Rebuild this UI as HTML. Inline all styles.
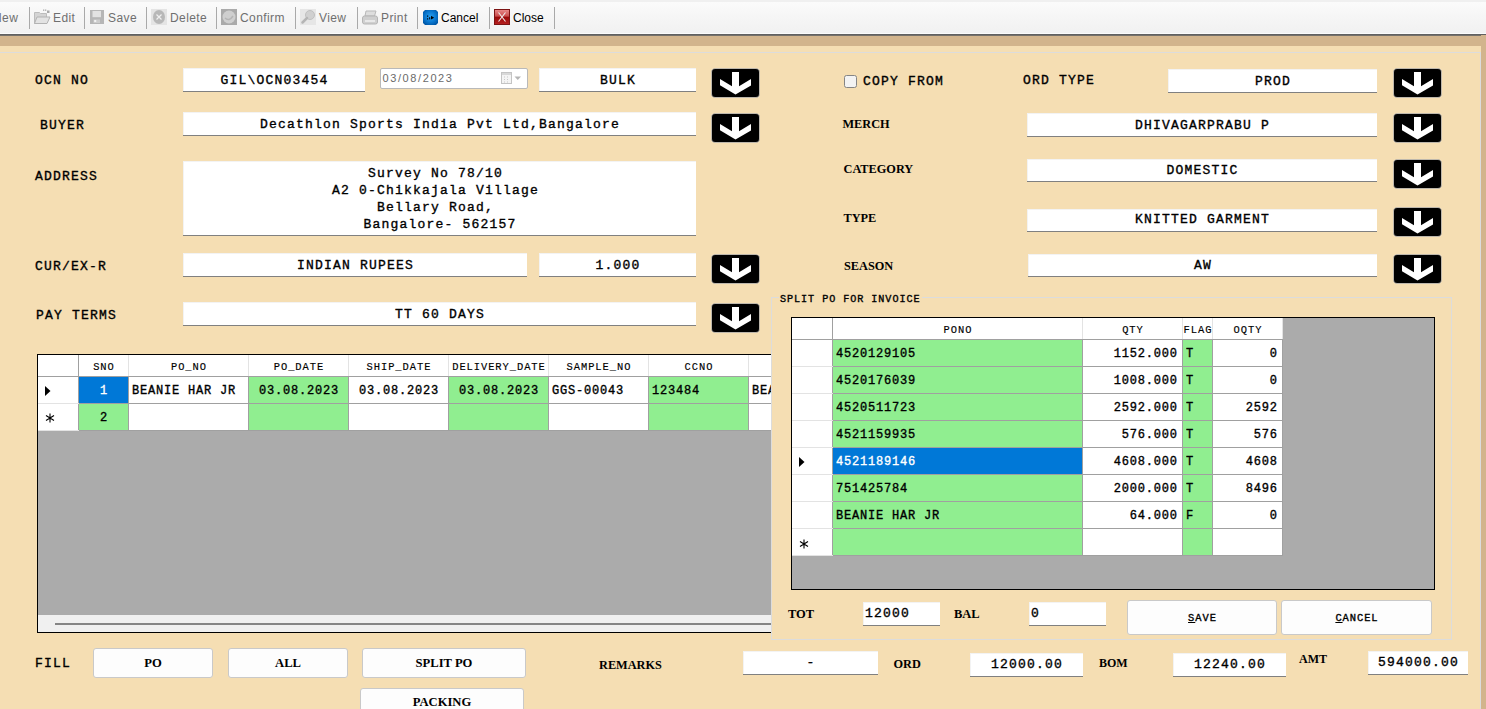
<!DOCTYPE html><html><head><meta charset="utf-8"><style>
*{margin:0;padding:0;box-sizing:border-box}
html,body{width:1486px;height:709px;overflow:hidden;background:#f5deb3;position:relative;font-family:"Liberation Sans",sans-serif}
.t{position:absolute;white-space:pre;color:#000}
.m{font-family:"Liberation Mono",monospace;font-weight:normal;-webkit-text-stroke:0.35px currentColor}
.s{font-family:"Liberation Serif",serif;font-weight:bold}
.tb{position:absolute;background:#fff;border-bottom:1px solid #808080;box-shadow:inset 1px 1px 0 #f3f3f3}
.ar{position:absolute;width:49px;height:30px}
.ar svg{display:block}
.bt{position:absolute;background:#fdfdfd;border:1px solid #c9c9c9;border-radius:3px}
.tool{position:absolute;font-family:"Liberation Sans",sans-serif;font-size:12px;line-height:14px;white-space:pre}
.sep{position:absolute;top:7px;width:1px;height:22px;background:#a9a9a9}
.g{position:absolute;overflow:hidden}
.c{position:absolute;overflow:hidden;white-space:pre;font-family:"Liberation Mono",monospace;font-weight:normal;-webkit-text-stroke:0.35px currentColor}
</style></head><body>
<div style="position:absolute;left:0;top:0;width:1486px;height:34px;background:linear-gradient(#f0f0f0 0,#f0f0f0 2px,#fbfbfb 2px,#f6f6f6 16px,#f1f1f1 33px)"></div>
<div style="position:absolute;left:0;top:33px;width:1486px;height:1px;background:#fbfbfb"></div>
<div style="position:absolute;left:0;top:34px;width:1486px;height:1px;background:#606060"></div>
<div style="position:absolute;left:0;top:35px;width:1486px;height:1px;background:#74706a"></div>
<div style="position:absolute;left:0;top:36px;width:1486px;height:10px;background:#d2b48c"></div>
<div style="position:absolute;left:1481px;top:35px;width:5px;height:674px;background:#d2b48c"></div>
<div style="position:absolute;left:0;top:52px;width:1481px;height:1px;background:#dcdcdc"></div>
<div style="position:absolute;left:1480px;top:52px;width:1px;height:657px;background:#dcdcdc"></div>
<div class="sep" style="left:29px"></div>
<div class="sep" style="left:84px"></div>
<div class="sep" style="left:146px"></div>
<div class="sep" style="left:216px"></div>
<div class="sep" style="left:295px"></div>
<div class="sep" style="left:357px"></div>
<div class="sep" style="left:417px"></div>
<div class="sep" style="left:489px"></div>
<div class="sep" style="left:554px"></div>
<div class="tool" style="left:-7px;top:10.8px;color:#6f6f6f;letter-spacing:0.4px">New</div>
<div class="tool" style="left:53px;top:10.8px;color:#6f6f6f;letter-spacing:0.4px">Edit</div>
<div class="tool" style="left:108px;top:10.8px;color:#6f6f6f;letter-spacing:0.4px">Save</div>
<div class="tool" style="left:170px;top:10.8px;color:#6f6f6f;letter-spacing:0.4px">Delete</div>
<div class="tool" style="left:240px;top:10.8px;color:#6f6f6f;letter-spacing:0.4px">Confirm</div>
<div class="tool" style="left:319px;top:10.8px;color:#6f6f6f;letter-spacing:0.4px">View</div>
<div class="tool" style="left:381px;top:10.8px;color:#6f6f6f;letter-spacing:0.4px">Print</div>
<div class="tool" style="left:441px;top:10.8px;color:#000;letter-spacing:0">Cancel</div>
<div class="tool" style="left:513px;top:10.8px;color:#000;letter-spacing:0">Close</div>
<svg style="position:absolute;left:34px;top:9px" width="17" height="16" viewBox="0 0 17 16">
<path d="M0.5 3.5 H5.5 L6.5 4.5 H12.5 V14.5 H0.5 Z" fill="#d4d4d4" stroke="#bcbcbc"/>
<path d="M3 8 H16 L13 14.5 H0.5 Z" fill="#e3e3e3" stroke="#b3b3b3"/>
<rect x="9" y="0.5" width="1.3" height="1.3" fill="#a9a9a9"/><rect x="11" y="0.5" width="1.3" height="1.3" fill="#a9a9a9"/>
<rect x="13" y="1.5" width="2.5" height="2.5" fill="#a9a9a9"/>
</svg>
<svg style="position:absolute;left:90px;top:10px" width="14" height="14" viewBox="0 0 14 14">
<rect x="0" y="0" width="14" height="14" fill="#b6b6b6"/>
<rect x="2.5" y="1" width="8.5" height="6.2" fill="#e2e2e2"/>
<rect x="3.5" y="9.5" width="6.5" height="3.5" fill="#cdcdcd"/>
<rect x="4.2" y="10" width="2" height="2" fill="#f2f2f2"/>
</svg>
<svg style="position:absolute;left:151px;top:9px" width="16" height="16" viewBox="0 0 16 16">
<rect x="0" y="0" width="16" height="16" fill="#e4e4e4"/>
<ellipse cx="8" cy="8" rx="6" ry="7" fill="#b8b8b8"/>
<path d="M5.5 5.5 L10.5 10.5 M10.5 5.5 L5.5 10.5" stroke="#f0f0f0" stroke-width="1.2"/>
</svg>
<svg style="position:absolute;left:221px;top:9px" width="16" height="16" viewBox="0 0 16 16">
<rect x="0" y="0" width="16" height="16" fill="#aaaaaa"/>
<circle cx="8" cy="8" r="6.5" fill="#cfcfcf"/>
<path d="M4 9 Q8 13 12 7" fill="none" stroke="#b5b5b5" stroke-width="1.5"/>
</svg>
<svg style="position:absolute;left:300px;top:9px" width="16" height="16" viewBox="0 0 16 16">
<rect x="0" y="0" width="16" height="16" fill="#e6e6e6"/>
<circle cx="10" cy="6" r="4.5" fill="#d0d0d0" stroke="#c0c0c0"/>
<path d="M7 9 L2.5 13.5" stroke="#b5b5b5" stroke-width="2.5" stroke-linecap="round"/>
</svg>
<svg style="position:absolute;left:362px;top:10px" width="16" height="15" viewBox="0 0 16 15">
<path d="M4 1 H14 L12.5 6 H3 Z" fill="#dedede" stroke="#b9b9b9"/>
<rect x="0.5" y="6" width="15" height="8" rx="2" fill="#cfcfcf" stroke="#b5b5b5"/>
<rect x="3" y="10" width="10" height="2" fill="#e8e8e8"/>
</svg>
<svg style="position:absolute;left:423px;top:10px" width="15" height="15" viewBox="0 0 15 15">
<defs><radialGradient id="cb" cx="0.5" cy="0.45" r="0.6"><stop offset="0" stop-color="#2aa0f0"/><stop offset="0.6" stop-color="#0a78d0"/><stop offset="1" stop-color="#0058a8"/></radialGradient></defs>
<path d="M2 0 H13 L15 2 V13 L13 15 H2 L0 13 V2 Z" fill="url(#cb)"/>
<rect x="4" y="5.5" width="1.2" height="1.2" fill="#000"/><rect x="4" y="8.3" width="1.2" height="1.2" fill="#000"/><rect x="6.2" y="7.2" width="1" height="2.2" fill="#000"/>
<path d="M8 5.8 L11.2 7.7 L8 9.6 Z" fill="#000"/>
</svg>
<svg style="position:absolute;left:494px;top:9px" width="16" height="16" viewBox="0 0 16 16">
<defs><linearGradient id="cr" x1="0" y1="0" x2="0" y2="1"><stop offset="0" stop-color="#e98c8c"/><stop offset="0.45" stop-color="#c84a4a"/><stop offset="0.5" stop-color="#980808"/><stop offset="1" stop-color="#b82222"/></linearGradient></defs>
<rect x="0.5" y="0.5" width="15" height="15" fill="url(#cr)" stroke="#7c1414"/>
<path d="M4.5 3.5 L11.5 12.5 M11.5 3.5 L4.5 12.5" stroke="#eeeeee" stroke-width="1.1"/>
</svg>
<div class="t m" style="left:35px;top:72.03px;font-size:13.02px;letter-spacing:1.19px;line-height:17px;color:#000;">OCN NO</div>
<div class="tb" style="left:183px;top:68px;width:182px;height:24px;"></div>
<div class="t m" style="left:183.59px;width:182px;text-align:center;top:71.53px;font-size:13.02px;letter-spacing:1.19px;line-height:17px;">GIL\OCN03454</div>
<div style="position:absolute;left:380px;top:68px;width:148px;height:21px;background:#fff;border:1px solid #b9b9b9;border-radius:2px"></div>
<div class="t" style="left:382.5px;top:71px;font-family:'Liberation Sans', sans-serif;font-size:11px;line-height:14px;letter-spacing:1.6px;color:#6a6a6a">03/08/2023</div>
<svg style="position:absolute;left:501px;top:72px" width="21" height="13" viewBox="0 0 21 13">
<rect x="0.5" y="0.5" width="10" height="11" fill="#f4f4f4" stroke="#c4c4c4"/>
<rect x="1" y="1" width="9" height="2" fill="#d8d8d8"/>
<path d="M3 5 h1 M6 5 h1 M3 7.5 h1 M6 7.5 h1 M3 10 h1 M6 10 h1" stroke="#c8c8c8"/>
<path d="M13.5 4.5 H20 L16.75 8 Z" fill="#b5b5b5"/>
</svg>
<div class="tb" style="left:539px;top:68px;width:157px;height:24px;"></div>
<div class="t m" style="left:539.59px;width:157px;text-align:center;top:71.53px;font-size:13.02px;letter-spacing:1.19px;line-height:17px;">BULK</div>
<div class="ar" style="left:711px;top:68px;"><svg width="49" height="30" viewBox="0 0 49 30"><rect x="0.5" y="0.5" width="48" height="29" rx="3.5" ry="3.5" fill="#000" stroke="#fff" stroke-opacity="0.5" stroke-width="1"/><path d="M21 4 H28 V18.3 L40 11 V17.4 L24.5 26.5 L9 17.2 V11 L21 18.3 Z" fill="#fff"/></svg></div>
<div style="position:absolute;left:844px;top:75px;width:13px;height:13px;background:#f3f3f3;border:1px solid #858585;border-radius:2.5px"></div>
<div class="t m" style="left:863px;top:73.03px;font-size:13.02px;letter-spacing:1.19px;line-height:17px;color:#000;">COPY FROM</div>
<div class="t m" style="left:1023px;top:72.03px;font-size:13.02px;letter-spacing:1.19px;line-height:17px;color:#000;">ORD TYPE</div>
<div class="tb" style="left:1168px;top:69px;width:209px;height:24px;"></div>
<div class="t m" style="left:1168.59px;width:209px;text-align:center;top:72.53px;font-size:13.02px;letter-spacing:1.19px;line-height:17px;">PROD</div>
<div class="ar" style="left:1392.5px;top:67.5px;"><svg width="49" height="30" viewBox="0 0 49 30"><rect x="0.5" y="0.5" width="48" height="29" rx="3.5" ry="3.5" fill="#000" stroke="#fff" stroke-opacity="0.5" stroke-width="1"/><path d="M21 4 H28 V18.3 L40 11 V17.4 L24.5 26.5 L9 17.2 V11 L21 18.3 Z" fill="#fff"/></svg></div>
<div class="t m" style="left:40px;top:116.53px;font-size:13.02px;letter-spacing:1.19px;line-height:17px;color:#000;">BUYER</div>
<div class="tb" style="left:183px;top:112px;width:513px;height:24px;"></div>
<div class="t m" style="left:183.59px;width:513px;text-align:center;top:116.03px;font-size:13.02px;letter-spacing:1.19px;line-height:17px;">Decathlon Sports India Pvt Ltd,Bangalore</div>
<div class="ar" style="left:711px;top:112.5px;"><svg width="49" height="30" viewBox="0 0 49 30"><rect x="0.5" y="0.5" width="48" height="29" rx="3.5" ry="3.5" fill="#000" stroke="#fff" stroke-opacity="0.5" stroke-width="1"/><path d="M21 4 H28 V18.3 L40 11 V17.4 L24.5 26.5 L9 17.2 V11 L21 18.3 Z" fill="#fff"/></svg></div>
<div class="t s" style="left:842.5px;top:115.85px;font-size:12.3px;line-height:16px;">MERCH</div>
<div class="tb" style="left:1027px;top:113px;width:350px;height:24px;"></div>
<div class="t m" style="left:1027.59px;width:350px;text-align:center;top:116.53px;font-size:13.02px;letter-spacing:1.19px;line-height:17px;">DHIVAGARPRABU P</div>
<div class="ar" style="left:1392.5px;top:112.5px;"><svg width="49" height="30" viewBox="0 0 49 30"><rect x="0.5" y="0.5" width="48" height="29" rx="3.5" ry="3.5" fill="#000" stroke="#fff" stroke-opacity="0.5" stroke-width="1"/><path d="M21 4 H28 V18.3 L40 11 V17.4 L24.5 26.5 L9 17.2 V11 L21 18.3 Z" fill="#fff"/></svg></div>
<div class="t m" style="left:35px;top:167.53px;font-size:13.02px;letter-spacing:1.19px;line-height:17px;color:#000;">ADDRESS</div>
<div class="tb" style="left:183px;top:161px;width:513px;height:75px"></div>
<div class="t m" style="left:183.59px;top:164.5px;width:513px;text-align:center;font-size:13.02px;letter-spacing:1.19px;line-height:17px;">Survey No 78/10 
A2 0-Chikkajala Village 
Bellary Road, 
Bangalore- 562157</div>
<div class="t s" style="left:843.5px;top:160.85px;font-size:12.3px;line-height:16px;">CATEGORY</div>
<div class="tb" style="left:1027px;top:159px;width:350px;height:23px;"></div>
<div class="t m" style="left:1027.59px;width:350px;text-align:center;top:161.73px;font-size:13.02px;letter-spacing:1.19px;line-height:17px;">DOMESTIC</div>
<div class="ar" style="left:1392.5px;top:158.5px;"><svg width="49" height="30" viewBox="0 0 49 30"><rect x="0.5" y="0.5" width="48" height="29" rx="3.5" ry="3.5" fill="#000" stroke="#fff" stroke-opacity="0.5" stroke-width="1"/><path d="M21 4 H28 V18.3 L40 11 V17.4 L24.5 26.5 L9 17.2 V11 L21 18.3 Z" fill="#fff"/></svg></div>
<div class="t s" style="left:843.5px;top:210.35px;font-size:12.3px;line-height:16px;">TYPE</div>
<div class="tb" style="left:1027px;top:209px;width:350px;height:23px;"></div>
<div class="t m" style="left:1027.59px;width:350px;text-align:center;top:211.03px;font-size:13.02px;letter-spacing:1.19px;line-height:17px;">KNITTED GARMENT</div>
<div class="ar" style="left:1392.5px;top:206.5px;"><svg width="49" height="30" viewBox="0 0 49 30"><rect x="0.5" y="0.5" width="48" height="29" rx="3.5" ry="3.5" fill="#000" stroke="#fff" stroke-opacity="0.5" stroke-width="1"/><path d="M21 4 H28 V18.3 L40 11 V17.4 L24.5 26.5 L9 17.2 V11 L21 18.3 Z" fill="#fff"/></svg></div>
<div class="t m" style="left:35px;top:258.03px;font-size:13.02px;letter-spacing:1.19px;line-height:17px;color:#000;">CUR/EX-R</div>
<div class="tb" style="left:183px;top:253px;width:344px;height:24px;"></div>
<div class="t m" style="left:183.59px;width:344px;text-align:center;top:256.53px;font-size:13.02px;letter-spacing:1.19px;line-height:17px;">INDIAN RUPEES</div>
<div class="tb" style="left:539px;top:253px;width:157px;height:24px;"></div>
<div class="t m" style="left:539.59px;width:157px;text-align:center;top:256.53px;font-size:13.02px;letter-spacing:1.19px;line-height:17px;">1.000</div>
<div class="ar" style="left:711px;top:253.5px;"><svg width="49" height="30" viewBox="0 0 49 30"><rect x="0.5" y="0.5" width="48" height="29" rx="3.5" ry="3.5" fill="#000" stroke="#fff" stroke-opacity="0.5" stroke-width="1"/><path d="M21 4 H28 V18.3 L40 11 V17.4 L24.5 26.5 L9 17.2 V11 L21 18.3 Z" fill="#fff"/></svg></div>
<div class="t s" style="left:844px;top:258.35px;font-size:12.3px;line-height:16px;">SEASON</div>
<div class="tb" style="left:1028px;top:254px;width:349px;height:23px;"></div>
<div class="t m" style="left:1028.59px;width:349px;text-align:center;top:256.53px;font-size:13.02px;letter-spacing:1.19px;line-height:17px;">AW</div>
<div class="ar" style="left:1392.5px;top:253.5px;"><svg width="49" height="30" viewBox="0 0 49 30"><rect x="0.5" y="0.5" width="48" height="29" rx="3.5" ry="3.5" fill="#000" stroke="#fff" stroke-opacity="0.5" stroke-width="1"/><path d="M21 4 H28 V18.3 L40 11 V17.4 L24.5 26.5 L9 17.2 V11 L21 18.3 Z" fill="#fff"/></svg></div>
<div class="t m" style="left:36px;top:306.53px;font-size:13.02px;letter-spacing:1.19px;line-height:17px;color:#000;">PAY TERMS</div>
<div class="tb" style="left:183px;top:302px;width:513px;height:24px;"></div>
<div class="t m" style="left:183.59px;width:513px;text-align:center;top:305.53px;font-size:13.02px;letter-spacing:1.19px;line-height:17px;">TT 60 DAYS</div>
<div class="ar" style="left:711px;top:302.5px;"><svg width="49" height="30" viewBox="0 0 49 30"><rect x="0.5" y="0.5" width="48" height="29" rx="3.5" ry="3.5" fill="#000" stroke="#fff" stroke-opacity="0.5" stroke-width="1"/><path d="M21 4 H28 V18.3 L40 11 V17.4 L24.5 26.5 L9 17.2 V11 L21 18.3 Z" fill="#fff"/></svg></div>
<div class="g" style="left:37px;top:354px;width:734px;height:279px;background:#ababab;border-top:1px solid #000;border-left:1px solid #000;border-bottom:1px solid #000">
<div class="c" style="left:0px;top:0px;width:40px;height:21px;background:#fff;"></div>
<div class="c" style="left:40px;top:0px;width:1px;height:22px;background:#a0a0a0"></div>
<div class="c" style="left:0px;top:21px;width:41px;height:1px;background:#a0a0a0"></div>
<div class="c" style="left:41px;top:0px;width:49px;height:21px;background:#fff;"></div>
<div class="c" style="left:90px;top:0px;width:1px;height:22px;background:#e3e3e3"></div>
<div class="c" style="left:41px;top:21px;width:50px;height:1px;background:#a0a0a0"></div>
<div class="c" style="left:41.48px;top:5.42px;width:49px;text-align:center;font-size:10.42px;letter-spacing:0.95px;line-height:14px;color:#000;-webkit-text-stroke:0.15px #000">SNO</div>
<div class="c" style="left:91px;top:0px;width:119px;height:21px;background:#fff;"></div>
<div class="c" style="left:210px;top:0px;width:1px;height:22px;background:#e3e3e3"></div>
<div class="c" style="left:91px;top:21px;width:120px;height:1px;background:#a0a0a0"></div>
<div class="c" style="left:91.48px;top:5.42px;width:119px;text-align:center;font-size:10.42px;letter-spacing:0.95px;line-height:14px;color:#000;-webkit-text-stroke:0.15px #000">PO_NO</div>
<div class="c" style="left:211px;top:0px;width:99px;height:21px;background:#fff;"></div>
<div class="c" style="left:310px;top:0px;width:1px;height:22px;background:#e3e3e3"></div>
<div class="c" style="left:211px;top:21px;width:100px;height:1px;background:#a0a0a0"></div>
<div class="c" style="left:211.48px;top:5.42px;width:99px;text-align:center;font-size:10.42px;letter-spacing:0.95px;line-height:14px;color:#000;-webkit-text-stroke:0.15px #000">PO_DATE</div>
<div class="c" style="left:311px;top:0px;width:99px;height:21px;background:#fff;"></div>
<div class="c" style="left:410px;top:0px;width:1px;height:22px;background:#e3e3e3"></div>
<div class="c" style="left:311px;top:21px;width:100px;height:1px;background:#a0a0a0"></div>
<div class="c" style="left:311.48px;top:5.42px;width:99px;text-align:center;font-size:10.42px;letter-spacing:0.95px;line-height:14px;color:#000;-webkit-text-stroke:0.15px #000">SHIP_DATE</div>
<div class="c" style="left:411px;top:0px;width:99px;height:21px;background:#fff;"></div>
<div class="c" style="left:510px;top:0px;width:1px;height:22px;background:#e3e3e3"></div>
<div class="c" style="left:411px;top:21px;width:100px;height:1px;background:#a0a0a0"></div>
<div class="c" style="left:411.48px;top:5.42px;width:99px;text-align:center;font-size:10.42px;letter-spacing:0.95px;line-height:14px;color:#000;-webkit-text-stroke:0.15px #000">DELIVERY_DATE</div>
<div class="c" style="left:511px;top:0px;width:99px;height:21px;background:#fff;"></div>
<div class="c" style="left:610px;top:0px;width:1px;height:22px;background:#e3e3e3"></div>
<div class="c" style="left:511px;top:21px;width:100px;height:1px;background:#a0a0a0"></div>
<div class="c" style="left:511.48px;top:5.42px;width:99px;text-align:center;font-size:10.42px;letter-spacing:0.95px;line-height:14px;color:#000;-webkit-text-stroke:0.15px #000">SAMPLE_NO</div>
<div class="c" style="left:611px;top:0px;width:99px;height:21px;background:#fff;"></div>
<div class="c" style="left:710px;top:0px;width:1px;height:22px;background:#e3e3e3"></div>
<div class="c" style="left:611px;top:21px;width:100px;height:1px;background:#a0a0a0"></div>
<div class="c" style="left:611.48px;top:5.42px;width:99px;text-align:center;font-size:10.42px;letter-spacing:0.95px;line-height:14px;color:#000;-webkit-text-stroke:0.15px #000">CCNO</div>
<div class="c" style="left:711px;top:0px;width:100px;height:21px;background:#fff;"></div>
<div class="c" style="left:811px;top:0px;width:1px;height:22px;background:#e3e3e3"></div>
<div class="c" style="left:711px;top:21px;width:101px;height:1px;background:#a0a0a0"></div>
<div class="c" style="left:0px;top:22px;width:40px;height:26px;background:#fff;"></div>
<div class="c" style="left:40px;top:22px;width:1px;height:27px;background:#a0a0a0"></div>
<div class="c" style="left:0px;top:48px;width:41px;height:1px;background:#e3e3e3"></div>
<div class="c" style="left:41px;top:22px;width:49px;height:26px;background:#0078d7;"></div>
<div class="c" style="left:90px;top:22px;width:1px;height:27px;background:#a0a0a0"></div>
<div class="c" style="left:41px;top:48px;width:50px;height:1px;background:#a0a0a0"></div>
<div class="c" style="left:41.40px;top:28.20px;width:49px;text-align:center;font-size:12.00px;letter-spacing:0.80px;line-height:16px;color:#fff;">1</div>
<div class="c" style="left:91px;top:22px;width:119px;height:26px;background:#fff;"></div>
<div class="c" style="left:210px;top:22px;width:1px;height:27px;background:#a0a0a0"></div>
<div class="c" style="left:91px;top:48px;width:120px;height:1px;background:#a0a0a0"></div>
<div class="c" style="left:94px;top:28.20px;width:116px;font-size:12.00px;letter-spacing:0.80px;line-height:16px;color:#000;">BEANIE HAR JR</div>
<div class="c" style="left:211px;top:22px;width:99px;height:26px;background:#90ee90;"></div>
<div class="c" style="left:310px;top:22px;width:1px;height:27px;background:#a0a0a0"></div>
<div class="c" style="left:211px;top:48px;width:100px;height:1px;background:#a0a0a0"></div>
<div class="c" style="left:211.40px;top:28.20px;width:99px;text-align:center;font-size:12.00px;letter-spacing:0.80px;line-height:16px;color:#000;">03.08.2023</div>
<div class="c" style="left:311px;top:22px;width:99px;height:26px;background:#fff;"></div>
<div class="c" style="left:410px;top:22px;width:1px;height:27px;background:#a0a0a0"></div>
<div class="c" style="left:311px;top:48px;width:100px;height:1px;background:#a0a0a0"></div>
<div class="c" style="left:311.40px;top:28.20px;width:99px;text-align:center;font-size:12.00px;letter-spacing:0.80px;line-height:16px;color:#000;">03.08.2023</div>
<div class="c" style="left:411px;top:22px;width:99px;height:26px;background:#90ee90;"></div>
<div class="c" style="left:510px;top:22px;width:1px;height:27px;background:#a0a0a0"></div>
<div class="c" style="left:411px;top:48px;width:100px;height:1px;background:#a0a0a0"></div>
<div class="c" style="left:411.40px;top:28.20px;width:99px;text-align:center;font-size:12.00px;letter-spacing:0.80px;line-height:16px;color:#000;">03.08.2023</div>
<div class="c" style="left:511px;top:22px;width:99px;height:26px;background:#fff;"></div>
<div class="c" style="left:610px;top:22px;width:1px;height:27px;background:#a0a0a0"></div>
<div class="c" style="left:511px;top:48px;width:100px;height:1px;background:#a0a0a0"></div>
<div class="c" style="left:514px;top:28.20px;width:96px;font-size:12.00px;letter-spacing:0.80px;line-height:16px;color:#000;">GGS-00043</div>
<div class="c" style="left:611px;top:22px;width:99px;height:26px;background:#90ee90;"></div>
<div class="c" style="left:710px;top:22px;width:1px;height:27px;background:#a0a0a0"></div>
<div class="c" style="left:611px;top:48px;width:100px;height:1px;background:#a0a0a0"></div>
<div class="c" style="left:614px;top:28.20px;width:96px;font-size:12.00px;letter-spacing:0.80px;line-height:16px;color:#000;">123484</div>
<div class="c" style="left:711px;top:22px;width:100px;height:26px;background:#fff;"></div>
<div class="c" style="left:811px;top:22px;width:1px;height:27px;background:#a0a0a0"></div>
<div class="c" style="left:711px;top:48px;width:101px;height:1px;background:#a0a0a0"></div>
<div class="c" style="left:714px;top:28.20px;width:97px;font-size:12.00px;letter-spacing:0.80px;line-height:16px;color:#000;">BEANIE HAR JR</div>
<div class="c" style="left:0px;top:49px;width:40px;height:26px;background:#fff;"></div>
<div class="c" style="left:40px;top:49px;width:1px;height:27px;background:#a0a0a0"></div>
<div class="c" style="left:0px;top:75px;width:41px;height:1px;background:#e3e3e3"></div>
<div class="c" style="left:41px;top:49px;width:49px;height:26px;background:#90ee90;"></div>
<div class="c" style="left:90px;top:49px;width:1px;height:27px;background:#a0a0a0"></div>
<div class="c" style="left:41px;top:75px;width:50px;height:1px;background:#a0a0a0"></div>
<div class="c" style="left:41.40px;top:55.20px;width:49px;text-align:center;font-size:12.00px;letter-spacing:0.80px;line-height:16px;color:#000;">2</div>
<div class="c" style="left:91px;top:49px;width:119px;height:26px;background:#fff;"></div>
<div class="c" style="left:210px;top:49px;width:1px;height:27px;background:#a0a0a0"></div>
<div class="c" style="left:91px;top:75px;width:120px;height:1px;background:#a0a0a0"></div>
<div class="c" style="left:211px;top:49px;width:99px;height:26px;background:#90ee90;"></div>
<div class="c" style="left:310px;top:49px;width:1px;height:27px;background:#a0a0a0"></div>
<div class="c" style="left:211px;top:75px;width:100px;height:1px;background:#a0a0a0"></div>
<div class="c" style="left:311px;top:49px;width:99px;height:26px;background:#fff;"></div>
<div class="c" style="left:410px;top:49px;width:1px;height:27px;background:#a0a0a0"></div>
<div class="c" style="left:311px;top:75px;width:100px;height:1px;background:#a0a0a0"></div>
<div class="c" style="left:411px;top:49px;width:99px;height:26px;background:#90ee90;"></div>
<div class="c" style="left:510px;top:49px;width:1px;height:27px;background:#a0a0a0"></div>
<div class="c" style="left:411px;top:75px;width:100px;height:1px;background:#a0a0a0"></div>
<div class="c" style="left:511px;top:49px;width:99px;height:26px;background:#fff;"></div>
<div class="c" style="left:610px;top:49px;width:1px;height:27px;background:#a0a0a0"></div>
<div class="c" style="left:511px;top:75px;width:100px;height:1px;background:#a0a0a0"></div>
<div class="c" style="left:611px;top:49px;width:99px;height:26px;background:#90ee90;"></div>
<div class="c" style="left:710px;top:49px;width:1px;height:27px;background:#a0a0a0"></div>
<div class="c" style="left:611px;top:75px;width:100px;height:1px;background:#a0a0a0"></div>
<div class="c" style="left:711px;top:49px;width:100px;height:26px;background:#fff;"></div>
<div class="c" style="left:811px;top:49px;width:1px;height:27px;background:#a0a0a0"></div>
<div class="c" style="left:711px;top:75px;width:101px;height:1px;background:#a0a0a0"></div>
<svg class="c" style="left:7px;top:31px" width="6" height="10" viewBox="0 0 6 10"><path d="M0 0 L5.5 5 L0 10 Z" fill="#000"/></svg>
<svg class="c" style="left:7px;top:58px" width="10" height="10" viewBox="0 0 10 10"><path d="M5 0.5 V9.5 M1 2.5 L9 7.5 M9 2.5 L1 7.5" stroke="#000" stroke-width="1.1"/></svg>
<div class="c" style="left:0;top:260px;width:800px;height:17px;background:#f0f0f0"></div>
<div class="c" style="left:17px;top:268px;width:800px;height:2px;background:#858585"></div>
</div>
<div style="position:absolute;left:771px;top:297px;width:681px;height:343px;background:#f5deb3;border:1px solid #dcdcdc"></div>
<div class="t m" style="left:779px;top:293px;font-size:10.16px;letter-spacing:0.93px;line-height:14px;background:#f5deb3;padding:0 1px">SPLIT PO FOR INVOICE</div>
<div class="g" style="left:791px;top:317px;width:644px;height:273px;background:#ababab;border:1px solid #000">
<div class="c" style="left:0px;top:0px;width:40px;height:21px;background:#fff;"></div>
<div class="c" style="left:40px;top:0px;width:1px;height:22px;background:#a0a0a0"></div>
<div class="c" style="left:0px;top:21px;width:41px;height:1px;background:#a0a0a0"></div>
<div class="c" style="left:41px;top:0px;width:249px;height:21px;background:#fff;"></div>
<div class="c" style="left:290px;top:0px;width:1px;height:22px;background:#e3e3e3"></div>
<div class="c" style="left:41px;top:21px;width:250px;height:1px;background:#a0a0a0"></div>
<div class="c" style="left:41.48px;top:5.02px;width:249px;text-align:center;font-size:10.42px;letter-spacing:0.95px;line-height:14px;color:#000;-webkit-text-stroke:0.15px #000">PONO</div>
<div class="c" style="left:291px;top:0px;width:99px;height:21px;background:#fff;"></div>
<div class="c" style="left:390px;top:0px;width:1px;height:22px;background:#e3e3e3"></div>
<div class="c" style="left:291px;top:21px;width:100px;height:1px;background:#a0a0a0"></div>
<div class="c" style="left:291.48px;top:5.02px;width:99px;text-align:center;font-size:10.42px;letter-spacing:0.95px;line-height:14px;color:#000;-webkit-text-stroke:0.15px #000">QTY</div>
<div class="c" style="left:391px;top:0px;width:29px;height:21px;background:#fff;"></div>
<div class="c" style="left:420px;top:0px;width:1px;height:22px;background:#e3e3e3"></div>
<div class="c" style="left:391px;top:21px;width:30px;height:1px;background:#a0a0a0"></div>
<div class="c" style="left:391.48px;top:5.02px;width:29px;text-align:center;font-size:10.42px;letter-spacing:0.95px;line-height:14px;color:#000;-webkit-text-stroke:0.15px #000">FLAG</div>
<div class="c" style="left:421px;top:0px;width:69px;height:21px;background:#fff;"></div>
<div class="c" style="left:490px;top:0px;width:1px;height:22px;background:#e3e3e3"></div>
<div class="c" style="left:421px;top:21px;width:70px;height:1px;background:#a0a0a0"></div>
<div class="c" style="left:421.48px;top:5.02px;width:69px;text-align:center;font-size:10.42px;letter-spacing:0.95px;line-height:14px;color:#000;-webkit-text-stroke:0.15px #000">OQTY</div>
<div class="c" style="left:0px;top:22px;width:40px;height:26px;background:#fff;"></div>
<div class="c" style="left:40px;top:22px;width:1px;height:27px;background:#a0a0a0"></div>
<div class="c" style="left:0px;top:48px;width:41px;height:1px;background:#e3e3e3"></div>
<div class="c" style="left:41px;top:22px;width:249px;height:26px;background:#90ee90;"></div>
<div class="c" style="left:290px;top:22px;width:1px;height:27px;background:#a0a0a0"></div>
<div class="c" style="left:41px;top:48px;width:250px;height:1px;background:#a0a0a0"></div>
<div class="c" style="left:44px;top:28.20px;width:246px;font-size:12.00px;letter-spacing:0.80px;line-height:16px;color:#000;">4520129105</div>
<div class="c" style="left:291px;top:22px;width:99px;height:26px;background:#fff;"></div>
<div class="c" style="left:390px;top:22px;width:1px;height:27px;background:#a0a0a0"></div>
<div class="c" style="left:291px;top:48px;width:100px;height:1px;background:#a0a0a0"></div>
<div class="c" style="left:291.80px;top:28.20px;width:94px;text-align:right;font-size:12.00px;letter-spacing:0.80px;line-height:16px;color:#000;">1152.000</div>
<div class="c" style="left:391px;top:22px;width:29px;height:26px;background:#90ee90;"></div>
<div class="c" style="left:420px;top:22px;width:1px;height:27px;background:#a0a0a0"></div>
<div class="c" style="left:391px;top:48px;width:30px;height:1px;background:#a0a0a0"></div>
<div class="c" style="left:394px;top:28.20px;width:26px;font-size:12.00px;letter-spacing:0.80px;line-height:16px;color:#000;">T</div>
<div class="c" style="left:421px;top:22px;width:69px;height:26px;background:#fff;"></div>
<div class="c" style="left:490px;top:22px;width:1px;height:27px;background:#a0a0a0"></div>
<div class="c" style="left:421px;top:48px;width:70px;height:1px;background:#a0a0a0"></div>
<div class="c" style="left:421.80px;top:28.20px;width:64px;text-align:right;font-size:12.00px;letter-spacing:0.80px;line-height:16px;color:#000;">0</div>
<div class="c" style="left:0px;top:49px;width:40px;height:26px;background:#fff;"></div>
<div class="c" style="left:40px;top:49px;width:1px;height:27px;background:#a0a0a0"></div>
<div class="c" style="left:0px;top:75px;width:41px;height:1px;background:#e3e3e3"></div>
<div class="c" style="left:41px;top:49px;width:249px;height:26px;background:#90ee90;"></div>
<div class="c" style="left:290px;top:49px;width:1px;height:27px;background:#a0a0a0"></div>
<div class="c" style="left:41px;top:75px;width:250px;height:1px;background:#a0a0a0"></div>
<div class="c" style="left:44px;top:55.20px;width:246px;font-size:12.00px;letter-spacing:0.80px;line-height:16px;color:#000;">4520176039</div>
<div class="c" style="left:291px;top:49px;width:99px;height:26px;background:#fff;"></div>
<div class="c" style="left:390px;top:49px;width:1px;height:27px;background:#a0a0a0"></div>
<div class="c" style="left:291px;top:75px;width:100px;height:1px;background:#a0a0a0"></div>
<div class="c" style="left:291.80px;top:55.20px;width:94px;text-align:right;font-size:12.00px;letter-spacing:0.80px;line-height:16px;color:#000;">1008.000</div>
<div class="c" style="left:391px;top:49px;width:29px;height:26px;background:#90ee90;"></div>
<div class="c" style="left:420px;top:49px;width:1px;height:27px;background:#a0a0a0"></div>
<div class="c" style="left:391px;top:75px;width:30px;height:1px;background:#a0a0a0"></div>
<div class="c" style="left:394px;top:55.20px;width:26px;font-size:12.00px;letter-spacing:0.80px;line-height:16px;color:#000;">T</div>
<div class="c" style="left:421px;top:49px;width:69px;height:26px;background:#fff;"></div>
<div class="c" style="left:490px;top:49px;width:1px;height:27px;background:#a0a0a0"></div>
<div class="c" style="left:421px;top:75px;width:70px;height:1px;background:#a0a0a0"></div>
<div class="c" style="left:421.80px;top:55.20px;width:64px;text-align:right;font-size:12.00px;letter-spacing:0.80px;line-height:16px;color:#000;">0</div>
<div class="c" style="left:0px;top:76px;width:40px;height:26px;background:#fff;"></div>
<div class="c" style="left:40px;top:76px;width:1px;height:27px;background:#a0a0a0"></div>
<div class="c" style="left:0px;top:102px;width:41px;height:1px;background:#e3e3e3"></div>
<div class="c" style="left:41px;top:76px;width:249px;height:26px;background:#90ee90;"></div>
<div class="c" style="left:290px;top:76px;width:1px;height:27px;background:#a0a0a0"></div>
<div class="c" style="left:41px;top:102px;width:250px;height:1px;background:#a0a0a0"></div>
<div class="c" style="left:44px;top:82.20px;width:246px;font-size:12.00px;letter-spacing:0.80px;line-height:16px;color:#000;">4520511723</div>
<div class="c" style="left:291px;top:76px;width:99px;height:26px;background:#fff;"></div>
<div class="c" style="left:390px;top:76px;width:1px;height:27px;background:#a0a0a0"></div>
<div class="c" style="left:291px;top:102px;width:100px;height:1px;background:#a0a0a0"></div>
<div class="c" style="left:291.80px;top:82.20px;width:94px;text-align:right;font-size:12.00px;letter-spacing:0.80px;line-height:16px;color:#000;">2592.000</div>
<div class="c" style="left:391px;top:76px;width:29px;height:26px;background:#90ee90;"></div>
<div class="c" style="left:420px;top:76px;width:1px;height:27px;background:#a0a0a0"></div>
<div class="c" style="left:391px;top:102px;width:30px;height:1px;background:#a0a0a0"></div>
<div class="c" style="left:394px;top:82.20px;width:26px;font-size:12.00px;letter-spacing:0.80px;line-height:16px;color:#000;">T</div>
<div class="c" style="left:421px;top:76px;width:69px;height:26px;background:#fff;"></div>
<div class="c" style="left:490px;top:76px;width:1px;height:27px;background:#a0a0a0"></div>
<div class="c" style="left:421px;top:102px;width:70px;height:1px;background:#a0a0a0"></div>
<div class="c" style="left:421.80px;top:82.20px;width:64px;text-align:right;font-size:12.00px;letter-spacing:0.80px;line-height:16px;color:#000;">2592</div>
<div class="c" style="left:0px;top:103px;width:40px;height:26px;background:#fff;"></div>
<div class="c" style="left:40px;top:103px;width:1px;height:27px;background:#a0a0a0"></div>
<div class="c" style="left:0px;top:129px;width:41px;height:1px;background:#e3e3e3"></div>
<div class="c" style="left:41px;top:103px;width:249px;height:26px;background:#90ee90;"></div>
<div class="c" style="left:290px;top:103px;width:1px;height:27px;background:#a0a0a0"></div>
<div class="c" style="left:41px;top:129px;width:250px;height:1px;background:#a0a0a0"></div>
<div class="c" style="left:44px;top:109.20px;width:246px;font-size:12.00px;letter-spacing:0.80px;line-height:16px;color:#000;">4521159935</div>
<div class="c" style="left:291px;top:103px;width:99px;height:26px;background:#fff;"></div>
<div class="c" style="left:390px;top:103px;width:1px;height:27px;background:#a0a0a0"></div>
<div class="c" style="left:291px;top:129px;width:100px;height:1px;background:#a0a0a0"></div>
<div class="c" style="left:291.80px;top:109.20px;width:94px;text-align:right;font-size:12.00px;letter-spacing:0.80px;line-height:16px;color:#000;">576.000</div>
<div class="c" style="left:391px;top:103px;width:29px;height:26px;background:#90ee90;"></div>
<div class="c" style="left:420px;top:103px;width:1px;height:27px;background:#a0a0a0"></div>
<div class="c" style="left:391px;top:129px;width:30px;height:1px;background:#a0a0a0"></div>
<div class="c" style="left:394px;top:109.20px;width:26px;font-size:12.00px;letter-spacing:0.80px;line-height:16px;color:#000;">T</div>
<div class="c" style="left:421px;top:103px;width:69px;height:26px;background:#fff;"></div>
<div class="c" style="left:490px;top:103px;width:1px;height:27px;background:#a0a0a0"></div>
<div class="c" style="left:421px;top:129px;width:70px;height:1px;background:#a0a0a0"></div>
<div class="c" style="left:421.80px;top:109.20px;width:64px;text-align:right;font-size:12.00px;letter-spacing:0.80px;line-height:16px;color:#000;">576</div>
<div class="c" style="left:0px;top:130px;width:40px;height:26px;background:#fff;"></div>
<div class="c" style="left:40px;top:130px;width:1px;height:27px;background:#a0a0a0"></div>
<div class="c" style="left:0px;top:156px;width:41px;height:1px;background:#e3e3e3"></div>
<div class="c" style="left:41px;top:130px;width:249px;height:26px;background:#0078d7;"></div>
<div class="c" style="left:290px;top:130px;width:1px;height:27px;background:#a0a0a0"></div>
<div class="c" style="left:41px;top:156px;width:250px;height:1px;background:#a0a0a0"></div>
<div class="c" style="left:44px;top:136.20px;width:246px;font-size:12.00px;letter-spacing:0.80px;line-height:16px;color:#fff;">4521189146</div>
<div class="c" style="left:291px;top:130px;width:99px;height:26px;background:#fff;"></div>
<div class="c" style="left:390px;top:130px;width:1px;height:27px;background:#a0a0a0"></div>
<div class="c" style="left:291px;top:156px;width:100px;height:1px;background:#a0a0a0"></div>
<div class="c" style="left:291.80px;top:136.20px;width:94px;text-align:right;font-size:12.00px;letter-spacing:0.80px;line-height:16px;color:#000;">4608.000</div>
<div class="c" style="left:391px;top:130px;width:29px;height:26px;background:#90ee90;"></div>
<div class="c" style="left:420px;top:130px;width:1px;height:27px;background:#a0a0a0"></div>
<div class="c" style="left:391px;top:156px;width:30px;height:1px;background:#a0a0a0"></div>
<div class="c" style="left:394px;top:136.20px;width:26px;font-size:12.00px;letter-spacing:0.80px;line-height:16px;color:#000;">T</div>
<div class="c" style="left:421px;top:130px;width:69px;height:26px;background:#fff;"></div>
<div class="c" style="left:490px;top:130px;width:1px;height:27px;background:#a0a0a0"></div>
<div class="c" style="left:421px;top:156px;width:70px;height:1px;background:#a0a0a0"></div>
<div class="c" style="left:421.80px;top:136.20px;width:64px;text-align:right;font-size:12.00px;letter-spacing:0.80px;line-height:16px;color:#000;">4608</div>
<div class="c" style="left:0px;top:157px;width:40px;height:26px;background:#fff;"></div>
<div class="c" style="left:40px;top:157px;width:1px;height:27px;background:#a0a0a0"></div>
<div class="c" style="left:0px;top:183px;width:41px;height:1px;background:#e3e3e3"></div>
<div class="c" style="left:41px;top:157px;width:249px;height:26px;background:#90ee90;"></div>
<div class="c" style="left:290px;top:157px;width:1px;height:27px;background:#a0a0a0"></div>
<div class="c" style="left:41px;top:183px;width:250px;height:1px;background:#a0a0a0"></div>
<div class="c" style="left:44px;top:163.20px;width:246px;font-size:12.00px;letter-spacing:0.80px;line-height:16px;color:#000;">751425784</div>
<div class="c" style="left:291px;top:157px;width:99px;height:26px;background:#fff;"></div>
<div class="c" style="left:390px;top:157px;width:1px;height:27px;background:#a0a0a0"></div>
<div class="c" style="left:291px;top:183px;width:100px;height:1px;background:#a0a0a0"></div>
<div class="c" style="left:291.80px;top:163.20px;width:94px;text-align:right;font-size:12.00px;letter-spacing:0.80px;line-height:16px;color:#000;">2000.000</div>
<div class="c" style="left:391px;top:157px;width:29px;height:26px;background:#90ee90;"></div>
<div class="c" style="left:420px;top:157px;width:1px;height:27px;background:#a0a0a0"></div>
<div class="c" style="left:391px;top:183px;width:30px;height:1px;background:#a0a0a0"></div>
<div class="c" style="left:394px;top:163.20px;width:26px;font-size:12.00px;letter-spacing:0.80px;line-height:16px;color:#000;">T</div>
<div class="c" style="left:421px;top:157px;width:69px;height:26px;background:#fff;"></div>
<div class="c" style="left:490px;top:157px;width:1px;height:27px;background:#a0a0a0"></div>
<div class="c" style="left:421px;top:183px;width:70px;height:1px;background:#a0a0a0"></div>
<div class="c" style="left:421.80px;top:163.20px;width:64px;text-align:right;font-size:12.00px;letter-spacing:0.80px;line-height:16px;color:#000;">8496</div>
<div class="c" style="left:0px;top:184px;width:40px;height:26px;background:#fff;"></div>
<div class="c" style="left:40px;top:184px;width:1px;height:27px;background:#a0a0a0"></div>
<div class="c" style="left:0px;top:210px;width:41px;height:1px;background:#e3e3e3"></div>
<div class="c" style="left:41px;top:184px;width:249px;height:26px;background:#90ee90;"></div>
<div class="c" style="left:290px;top:184px;width:1px;height:27px;background:#a0a0a0"></div>
<div class="c" style="left:41px;top:210px;width:250px;height:1px;background:#a0a0a0"></div>
<div class="c" style="left:44px;top:190.20px;width:246px;font-size:12.00px;letter-spacing:0.80px;line-height:16px;color:#000;">BEANIE HAR JR</div>
<div class="c" style="left:291px;top:184px;width:99px;height:26px;background:#fff;"></div>
<div class="c" style="left:390px;top:184px;width:1px;height:27px;background:#a0a0a0"></div>
<div class="c" style="left:291px;top:210px;width:100px;height:1px;background:#a0a0a0"></div>
<div class="c" style="left:291.80px;top:190.20px;width:94px;text-align:right;font-size:12.00px;letter-spacing:0.80px;line-height:16px;color:#000;">64.000</div>
<div class="c" style="left:391px;top:184px;width:29px;height:26px;background:#90ee90;"></div>
<div class="c" style="left:420px;top:184px;width:1px;height:27px;background:#a0a0a0"></div>
<div class="c" style="left:391px;top:210px;width:30px;height:1px;background:#a0a0a0"></div>
<div class="c" style="left:394px;top:190.20px;width:26px;font-size:12.00px;letter-spacing:0.80px;line-height:16px;color:#000;">F</div>
<div class="c" style="left:421px;top:184px;width:69px;height:26px;background:#fff;"></div>
<div class="c" style="left:490px;top:184px;width:1px;height:27px;background:#a0a0a0"></div>
<div class="c" style="left:421px;top:210px;width:70px;height:1px;background:#a0a0a0"></div>
<div class="c" style="left:421.80px;top:190.20px;width:64px;text-align:right;font-size:12.00px;letter-spacing:0.80px;line-height:16px;color:#000;">0</div>
<div class="c" style="left:0px;top:211px;width:40px;height:26px;background:#fff;"></div>
<div class="c" style="left:40px;top:211px;width:1px;height:27px;background:#a0a0a0"></div>
<div class="c" style="left:0px;top:237px;width:41px;height:1px;background:#e3e3e3"></div>
<div class="c" style="left:41px;top:211px;width:249px;height:26px;background:#90ee90;"></div>
<div class="c" style="left:290px;top:211px;width:1px;height:27px;background:#a0a0a0"></div>
<div class="c" style="left:41px;top:237px;width:250px;height:1px;background:#a0a0a0"></div>
<div class="c" style="left:291px;top:211px;width:99px;height:26px;background:#fff;"></div>
<div class="c" style="left:390px;top:211px;width:1px;height:27px;background:#a0a0a0"></div>
<div class="c" style="left:291px;top:237px;width:100px;height:1px;background:#a0a0a0"></div>
<div class="c" style="left:391px;top:211px;width:29px;height:26px;background:#90ee90;"></div>
<div class="c" style="left:420px;top:211px;width:1px;height:27px;background:#a0a0a0"></div>
<div class="c" style="left:391px;top:237px;width:30px;height:1px;background:#a0a0a0"></div>
<div class="c" style="left:421px;top:211px;width:69px;height:26px;background:#fff;"></div>
<div class="c" style="left:490px;top:211px;width:1px;height:27px;background:#a0a0a0"></div>
<div class="c" style="left:421px;top:237px;width:70px;height:1px;background:#a0a0a0"></div>
<svg class="c" style="left:7px;top:139px" width="6" height="10" viewBox="0 0 6 10"><path d="M0 0 L5.5 5 L0 10 Z" fill="#000"/></svg>
<svg class="c" style="left:7px;top:221px" width="10" height="10" viewBox="0 0 10 10"><path d="M5 0.5 V9.5 M1 2.5 L9 7.5 M9 2.5 L1 7.5" stroke="#000" stroke-width="1.1"/></svg>
</div>
<div class="t s" style="left:788px;top:605.78px;font-size:12.5px;line-height:16px;">TOT</div>
<div class="tb" style="left:863px;top:602px;width:77px;height:24px;"></div>
<div class="t m" style="left:865px;top:604.73px;font-size:13.02px;letter-spacing:1.19px;line-height:17px;">12000</div>
<div class="t s" style="left:954px;top:605.78px;font-size:12.5px;line-height:16px;">BAL</div>
<div class="tb" style="left:1029px;top:602px;width:77px;height:24px;"></div>
<div class="t m" style="left:1031px;top:604.73px;font-size:13.02px;letter-spacing:1.19px;line-height:17px;">0</div>
<div class="bt" style="left:1127px;top:600px;width:150px;height:35px;"></div>
<div class="t m" style="left:1127.48px;width:150px;text-align:center;top:611.22px;font-size:10.42px;letter-spacing:0.95px;line-height:14px;"><u>S</u>AVE</div>
<div class="bt" style="left:1281px;top:600px;width:151px;height:35px;"></div>
<div class="t m" style="left:1281.48px;width:151px;text-align:center;top:611.22px;font-size:10.42px;letter-spacing:0.95px;line-height:14px;"><u>C</u>ANCEL</div>
<div class="t m" style="left:35px;top:655.03px;font-size:13.02px;letter-spacing:1.19px;line-height:17px;color:#000;">FILL</div>
<div class="bt" style="left:93px;top:648px;width:120px;height:30px;"></div>
<div class="t s" style="left:93px;width:120px;text-align:center;top:655.75px;font-size:12.6px;line-height:14px;">PO</div>
<div class="bt" style="left:228px;top:648px;width:120px;height:30px;"></div>
<div class="t s" style="left:228px;width:120px;text-align:center;top:655.75px;font-size:12.6px;line-height:14px;">ALL</div>
<div class="bt" style="left:362px;top:648px;width:164px;height:30px;"></div>
<div class="t s" style="left:362px;width:164px;text-align:center;top:655.75px;font-size:12.6px;line-height:14px;">SPLIT PO</div>
<div class="bt" style="left:360px;top:688px;width:164px;height:32px;"></div>
<div class="t s" style="left:360px;width:164px;text-align:center;top:695.45px;font-size:12.6px;line-height:14px;">PACKING</div>
<div class="t s" style="left:599px;top:656.85px;font-size:12.3px;line-height:16px;">REMARKS</div>
<div class="tb" style="left:743px;top:651px;width:135px;height:24px;"></div>
<div class="t m" style="left:743.59px;width:135px;text-align:center;top:654.03px;font-size:13.02px;letter-spacing:1.19px;line-height:17px;">-</div>
<div class="t s" style="left:893.5px;top:656.15px;font-size:12.3px;line-height:16px;">ORD</div>
<div class="tb" style="left:970px;top:653px;width:113px;height:24px;"></div>
<div class="t m" style="left:970.59px;width:113px;text-align:center;top:656.03px;font-size:13.02px;letter-spacing:1.19px;line-height:17px;">12000.00</div>
<div class="t s" style="left:1099px;top:656.45px;font-size:12px;line-height:15px;">BOM</div>
<div class="tb" style="left:1173px;top:653px;width:113px;height:24px;"></div>
<div class="t m" style="left:1173.59px;width:113px;text-align:center;top:656.03px;font-size:13.02px;letter-spacing:1.19px;line-height:17px;">12240.00</div>
<div class="t s" style="left:1299px;top:651.95px;font-size:12px;line-height:15px;">AMT</div>
<div class="tb" style="left:1368px;top:651px;width:100px;height:24px;"></div>
<div class="t m" style="left:1368.59px;width:100px;text-align:center;top:654.03px;font-size:13.02px;letter-spacing:1.19px;line-height:17px;">594000.00</div>
</body></html>
